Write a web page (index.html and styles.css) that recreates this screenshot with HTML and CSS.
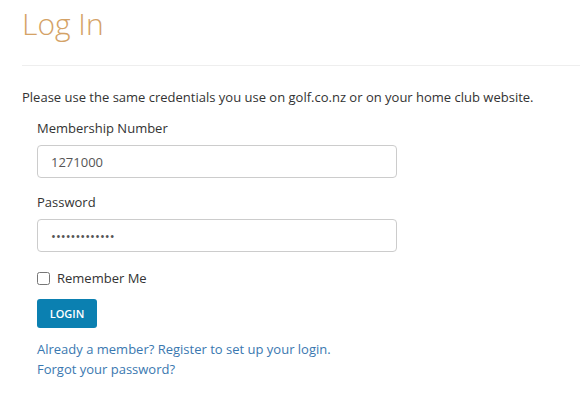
FILE: index.html
```html
<!DOCTYPE html>
<html>
<head>
<meta charset="utf-8">
<link rel="stylesheet" href="styles.css">
</head>
<body>
<div class="page">
  <h1 class="title">Log In</h1>
  <hr class="rule">
  <p class="intro">Please use the same credentials you use on golf.co.nz or on your home club website.</p>
  <form class="form">
    <label class="label" for="num">Membership Number</label>
    <input class="field" id="num" type="text" value="1271000">
    <label class="label" for="pw">Password</label>
    <input class="field" id="pw" type="password" value="abcdefghijklm">
    <label class="remember"><input class="check" type="checkbox"> Remember Me</label>
    <button class="btn" type="button">LOGIN</button>
    <a class="link" href="#">Already a member? Register to set up your login.</a>
    <a class="link" href="#">Forgot your password?</a>
  </form>
</div>
</body>
</html>
```
FILE: styles.css
```css
html, body {
  margin: 0;
  padding: 0;
  background: #fff;
}
body {
  font-family: "Open Sans", "Liberation Sans", sans-serif;
  font-size: 13px;
  color: #333;
}
.page {
  padding-left: 22px;
}
.title {
  margin: 0;
  padding-top: 4px;
  font-size: 30px;
  font-weight: 300;
  line-height: 40px;
  color: #d4a266;
}
.rule {
  margin: 21px 0 0 0;
  border: 0;
  border-top: 1px solid #eee;
  height: 0;
}
.intro {
  margin: 22px 0 0 0;
  line-height: 18px;
}
.form {
  display: flex;
  flex-direction: column;
  align-items: flex-start;
  padding-left: 15px;
  margin-top: 13px;
}
.label {
  line-height: 18px;
  margin-bottom: 8px;
}
.field {
  box-sizing: border-box;
  width: 360px;
  height: 33px;
  border: 1px solid #ccc;
  border-radius: 4px;
  padding: 6px 13px;
  font-family: "Open Sans", "Liberation Sans", sans-serif;
  font-size: 13px;
  color: #555;
  margin-bottom: 15px;
}
.remember {
  display: flex;
  align-items: center;
  gap: 7px;
  line-height: 18px;
  margin-top: 2px;
}
.check {
  margin: 0;
  width: 13px;
  height: 13px;
}
.btn {
  margin-top: 12px;
  width: 60px;
  height: 29px;
  background: #0b80b1;
  color: #fff;
  border: 0;
  border-radius: 3px;
  font-family: "Open Sans", "Liberation Sans", sans-serif;
  font-size: 11px;
  font-weight: 600;
  padding: 0;
}
.link {
  color: #3a78b0;
  text-decoration: none;
  line-height: 20px;
}
.btn + .link {
  margin-top: 11px;
}
```
